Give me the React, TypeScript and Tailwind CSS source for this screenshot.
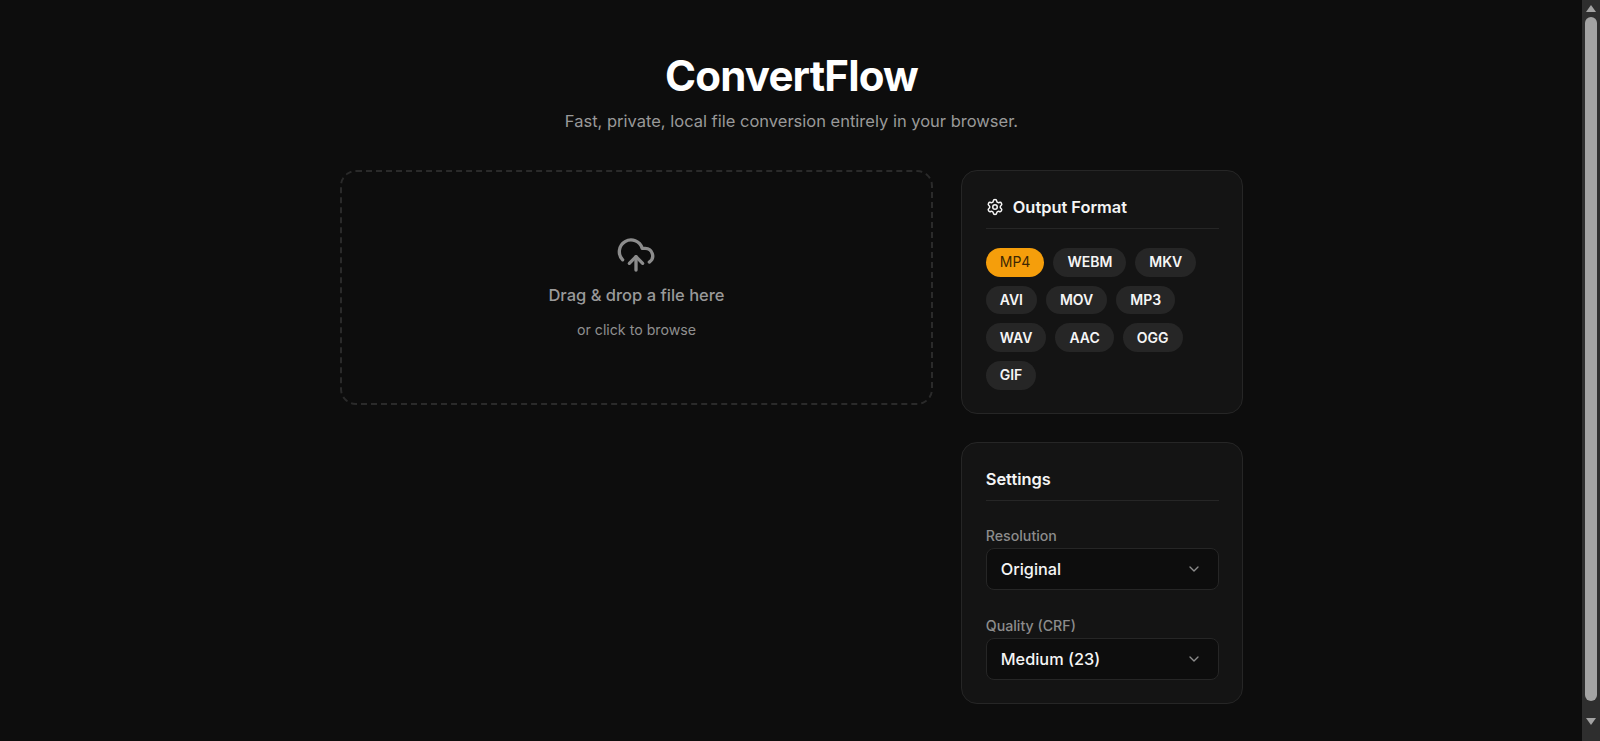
import { ChevronDown, CloudUpload, Settings } from 'lucide-react';

const formats = ['MP4', 'WEBM', 'MKV', 'AVI', 'MOV', 'MP3', 'WAV', 'AAC', 'OGG', 'GIF'];

function Dropdown({ label, value }: { label: string; value: string }) {
  return (
    <div className="flex flex-col">
      <label className="text-[14.2px] leading-[16px] font-medium text-[#8c8c8c] mb-[4px]">{label}</label>
      <button className="h-[42px] w-full flex items-center justify-between pl-[14px] pr-[16px] rounded-[8px] border border-[#262626] bg-[#0d0d0d] text-[16.3px] font-medium text-[#f5f5f5]">
        <span>{value}</span>
        <ChevronDown size={16} strokeWidth={2} className="text-[#8c8c8c]" />
      </button>
    </div>
  );
}

function Scrollbar() {
  return (
    <div className="w-[18px] h-full shrink-0 bg-[#2e2e2e] flex flex-col items-center">
      <div className="h-[17px] shrink-0 flex items-center justify-center">
        <div className="w-0 h-0 border-x-[5px] border-x-transparent border-b-[7px] border-b-[#a3a3a3]" />
      </div>
      <div className="w-[12px] h-[684px] rounded-full bg-[#a3a3a3]" />
      <div className="flex-1 flex items-center justify-center">
        <div className="w-0 h-0 border-x-[5px] border-x-transparent border-t-[7px] border-t-[#a3a3a3]" />
      </div>
    </div>
  );
}

export default function App() {
  return (
    <div className="h-[741px] w-full flex overflow-hidden bg-[#0d0d0d] text-white [font-family:Inter,sans-serif]">
      <main className="flex-1 min-w-0 pl-[1px]">
        <div className="w-[902.5px] mx-auto pt-[48px]">
          <header className="text-center mb-[37px]">
            <h1 className="text-[42px] leading-[56px] font-bold tracking-[-0.84px] text-white">ConvertFlow</h1>
            <p className="mt-[5px] text-[16.5px] leading-[24px] text-[#999999]">Fast, private, local file conversion entirely in your browser.</p>
          </header>

          <div className="grid grid-cols-[592.5px_282px] gap-[28px] items-start">
            <div className="h-[235px] rounded-[16px] border-2 border-dashed border-[#2a2a2a] flex flex-col items-center pt-[63px]">
              <CloudUpload size={40} strokeWidth={2} className="text-[#8c8c8c] -ml-[2px]" />
              <p className="mt-[8px] text-[16.5px] leading-[24px] font-medium text-[#999999]">Drag &amp; drop a file here</p>
              <p className="mt-[14px] text-[14.2px] leading-[18px] text-[#8f8f8f]">or click to browse</p>
            </div>

            <aside className="flex flex-col gap-[28px]">
              <section className="rounded-[16px] border border-[#262626] bg-[#141414] pl-[24px] pr-[23px] pt-[25px] pb-[23px]">
                <div className="flex items-center gap-[9px] pb-[10px] border-b border-[#262626] mb-[19px]">
                  <Settings size={18} strokeWidth={2} className="text-[#f5f5f5]" />
                  <h2 className="text-[16.4px] leading-[22px] font-semibold text-[#f5f5f5]">Output Format</h2>
                </div>
                <div className="flex flex-wrap gap-x-[9px] gap-y-[9px]">
                  {formats.map((f, i) => (
                    <button
                      key={f}
                      className={i === 0
                        ? 'h-[28.7px] px-[14px] pb-[1px] rounded-full bg-[#f59e0b] text-[14px] font-normal text-[#3d2703]'
                        : 'h-[28.7px] px-[14px] pb-[1px] rounded-full bg-[#262626] text-[14px] font-semibold text-[#f5f5f5]'}
                    >
                      {f}
                    </button>
                  ))}
                </div>
              </section>

              <section className="rounded-[16px] border border-[#262626] bg-[#141414] pl-[24px] pr-[23px] pt-[25px] pb-[23px]">
                <h2 className="text-[16.4px] leading-[22px] font-semibold text-[#f5f5f5] pb-[10px] border-b border-[#262626] mb-[27px]">Settings</h2>
                <div className="flex flex-col gap-[28px]">
                  <Dropdown label="Resolution" value="Original" />
                  <Dropdown label="Quality (CRF)" value="Medium (23)" />
                </div>
              </section>
            </aside>
          </div>
        </div>
      </main>
      <Scrollbar />
    </div>
  );
}
